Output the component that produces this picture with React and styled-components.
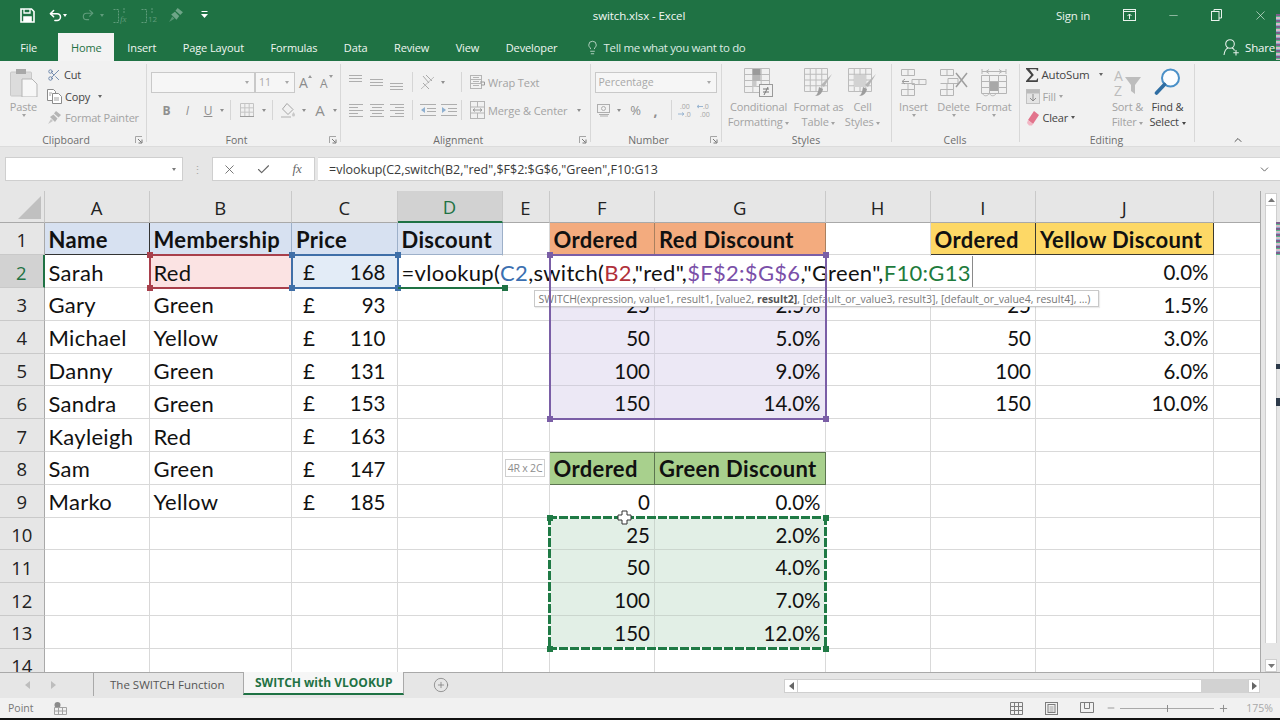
import styled, { createGlobalStyle, css } from "styled-components";
import {
  Undo2,
  Redo2,
  Lightbulb,
  X,
  Check,
  Minus,
  Plus,
  ChevronDown,
  ChevronUp,
  CirclePlus,
  Scissors,
} from "lucide-react";

const GlobalStyle = createGlobalStyle`
  html, body {
    margin: 0;
    padding: 0;
    background: #e6e6e6;
    overflow: hidden;
  }
  * { box-sizing: border-box; }
`;

const Window = styled.div`
  width: 1280px;
  height: 720px;
  display: flex;
  flex-direction: column;
  font-family: "Open Sans", "Liberation Sans", sans-serif;
  overflow: hidden;
  position: relative;
`;

/* stray pixels at the right edge of the recording */
const EdgeSliver = styled.div`
  position: absolute;
  right: 0;
  top: ${({ $top }) => $top}px;
  width: 4px;
  height: ${({ $h }) => $h}px;
  background: ${({ $dark }) =>
    $dark
      ? "#2d3a4a"
      : "repeating-linear-gradient(180deg, #7d5f8c 0 2px, #58b48a 2px 3px, #d9b9c9 3px 5px, #8fa7c9 5px 6px)"};
`;

/* ---------- title bar ---------- */

const TitleBar = styled.div`
  height: 30px;
  flex: none;
  background: #1f7244;
  color: #fff;
  display: grid;
  grid-template-columns: 1fr auto 1fr;
  align-items: center;
`;

const QuickAccess = styled.div`
  display: flex;
  align-items: center;
  padding-left: 20px;
  color: #fff;
`;

const QatSlot = styled.div`
  width: ${({ $w }) => $w}px;
  display: flex;
  align-items: center;
  justify-content: ${({ $start }) => ($start ? "flex-start" : "center")};
  color: ${({ $dim }) => ($dim ? "#5f9c7b" : "#fff")};
`;

const TinyCaret = styled.span`
  display: inline-block;
  width: 0;
  height: 0;
  vertical-align: middle;
  border-left: 2.5px solid transparent;
  border-right: 2.5px solid transparent;
  border-top: 3px solid ${({ $color }) => $color || "currentColor"};
`;

const WindowTitle = styled.div`
  font-size: 11.5px;
  letter-spacing: -0.1px;
  color: #f2f7f4;
  padding-right: 2px;
`;

const WindowControls = styled.div`
  display: flex;
  align-items: center;
  justify-content: flex-end;
  color: #e9f2ed;
  margin-right: -2px;
`;

const SignIn = styled.div`
  font-size: 11.5px;
  letter-spacing: -0.2px;
  margin-right: 18px;
`;

const WinButton = styled.div`
  width: 43.5px;
  display: flex;
  justify-content: center;
`;

/* ---------- ribbon tabs ---------- */

const TabRow = styled.div`
  height: 31px;
  flex: none;
  background: #1f7244;
  display: flex;
  align-items: flex-end;
  padding-left: 7px;
  color: #f0f6f2;
  font-size: 11px;
`;

const RibbonTab = styled.div`
  height: 28px;
  padding: 0 13.2px;
  display: flex;
  align-items: center;
  white-space: nowrap;
  letter-spacing: -0.1px;
  margin-right: ${({ $gap }) => $gap || 0}px;
  ${({ $active }) =>
    $active &&
    css`
      background: #f3f3f3;
      color: #1f7244;
      padding: 0 12.5px;
    `}
`;

const TellMe = styled.div`
  display: flex;
  align-items: center;
  gap: 4px;
  height: 28px;
  margin-left: 14px;
  font-size: 11.5px;
  letter-spacing: -0.35px;
  color: #dcebe3;
`;

const ShareBox = styled.div`
  margin-left: auto;
  height: 28px;
  display: flex;
  align-items: center;
  gap: 5px;
  padding-right: 5px;
  font-size: 11.5px;
  letter-spacing: -0.2px;
  color: #f4f8f6;
`;

/* ---------- ribbon ---------- */

const Ribbon = styled.div`
  height: 86px;
  flex: none;
  background: #f1f1f1;
  border-bottom: 1px solid #dcdcdc;
  display: flex;
  padding: 3px 0 4px;
  font-size: 11px;
  color: #a3a3a3;
`;

const Group = styled.div`
  flex: 0 0 ${({ $w }) => $w}px;
  display: flex;
  flex-direction: column;
  border-right: ${({ $last }) => ($last ? "none" : "1px solid #d8d8d8")};
`;

const GroupBody = styled.div`
  flex: 1;
  min-height: 0;
  display: flex;
  padding-left: ${({ $pad }) => $pad || 0}px;
`;

const GroupFooter = styled.div`
  height: 12px;
  margin-bottom: -4px;
  display: flex;
  align-items: center;
  justify-content: center;
  position: relative;
  padding-right: ${({ $launch }) => ($launch ? 14 : 0)}px;
  font-size: 10.5px;
  color: #6d6d6d;
`;

const Launcher = styled.svg`
  position: absolute;
  right: 3px;
  top: 2px;
`;

const BigButton = styled.div`
  width: ${({ $w }) => $w}px;
  flex: none;
  display: flex;
  flex-direction: column;
  align-items: center;
  padding-top: 4px;
  text-align: center;
  color: ${({ $dark }) => ($dark ? "#444" : "#a3a3a3")};
  line-height: 15px;
  white-space: nowrap;
  letter-spacing: -0.15px;
`;

const BigIcon = styled.div`
  height: 31px;
  display: flex;
  align-items: flex-start;
  justify-content: center;
`;

const SmallColumn = styled.div`
  display: flex;
  flex-direction: column;
  width: ${({ $w }) => $w}px;
  flex: none;
`;

const SmallRow = styled.div`
  height: 21.5px;
  display: flex;
  align-items: center;
  gap: 3px;
  white-space: nowrap;
  letter-spacing: -0.2px;
  color: ${({ $dark }) => ($dark ? "#444" : "#a3a3a3")};
  ${({ $big }) => $big && "font-size: 11.5px;"}
`;

const ControlStack = styled.div`
  display: flex;
  flex-direction: column;
  gap: 6px;
  padding-top: 7px;
`;

const ControlRow = styled.div`
  height: 22px;
  display: flex;
  align-items: center;
  padding-left: ${({ $pad }) => $pad || 0}px;
`;

const Slot = styled.div`
  width: ${({ $w }) => $w}px;
  flex: none;
  display: flex;
  align-items: center;
  justify-content: center;
  color: #8f8f8f;
  font-weight: ${({ $bold }) => ($bold ? 700 : 400)};
  font-style: ${({ $italic }) => ($italic ? "italic" : "normal")};
  text-decoration: ${({ $under }) => ($under ? "underline" : "none")};
  font-size: ${({ $size }) => $size || 12}px;
`;

const RowDivider = styled.div`
  width: 1px;
  height: 20px;
  flex: none;
  background: #d6d6d6;
  margin-left: ${({ $l }) => $l ?? 4}px;
  margin-right: ${({ $r }) => $r ?? 4}px;
`;

const FieldBox = styled.div`
  width: ${({ $w }) => $w}px;
  height: 21px;
  flex: none;
  background: #f6f6f6;
  border: 1px solid #c9c9c9;
  margin-left: ${({ $ml }) => $ml || 0}px;
  display: flex;
  align-items: center;
  justify-content: space-between;
  padding: 0 5px 0 3px;
  color: #a8a8a8;
  font-size: 10.5px;
`;

const WideLabel = styled.span`
  letter-spacing: -0.1px;
  white-space: nowrap;
`;

/* ---------- formula bar ---------- */

const FormulaZone = styled.div`
  height: 44px;
  flex: none;
  background: #e6e6e6;
  display: flex;
  align-items: flex-start;
  padding: 10px 0 0 5px;
`;

const NameBox = styled.div`
  width: 178px;
  height: 24px;
  background: #fff;
  border: 1px solid #cfcfcf;
  display: flex;
  align-items: center;
  justify-content: flex-end;
  padding-right: 6px;
  color: #7b7b7b;
`;

const Grip = styled.div`
  width: 29px;
  height: 24px;
  display: flex;
  align-items: center;
  justify-content: center;
  color: #a9a9a9;
  font-size: 11px;
`;

const FxButtons = styled.div`
  width: 103px;
  height: 24px;
  background: #fff;
  border: 1px solid #cfcfcf;
  display: flex;
  align-items: center;
  padding-left: 0;
  color: #7a7a7a;
`;

const FxSlot = styled.div`
  width: 34px;
  display: flex;
  justify-content: center;
  font-family: "Liberation Serif", serif;
  font-style: italic;
  font-size: 13px;
  color: #666;
`;

const FormulaInput = styled.div`
  flex: 1;
  height: 24px;
  margin: 0 0 0 3px;
  background: #fff;
  border-top: 1px solid #d6d6d6;
  border-bottom: 1px solid #cfcfcf;
  display: flex;
  align-items: center;
  justify-content: space-between;
  padding: 0 9px 0 11px;
  font-size: 12.5px;
  color: #3a3a3a;
`;

/* ---------- sheet ---------- */

const COLUMNS = ["A", "B", "C", "D", "E", "F", "G", "H", "I", "J", ""];

const tracks = css`
  display: grid;
  grid-template-columns: 44.5px 105px 142.5px 105.5px 105px 47px 105.5px 170.5px 105px 105.5px 177.5px 47.5px;
  grid-template-rows: 31.5px repeat(14, 32.8px);
`;

const SheetArea = styled.div`
  height: 481px;
  flex: none;
  display: flex;
  background: #e6e6e6;
  overflow: hidden;
`;

const SheetFrame = styled.div`
  width: 1261px;
  flex: none;
  position: relative;
  overflow: hidden;
  background: #fff;
  border-right: 1px solid #a9a9a9;
`;

const SheetGrid = styled.div`
  ${tracks}
  font-family: Lato, "Liberation Sans", sans-serif;
  font-size: 22px;
  color: #111;
`;

const OverlayGrid = styled.div`
  ${tracks}
  position: absolute;
  inset: 0;
  pointer-events: none;
  font-family: Lato, "Liberation Sans", sans-serif;
  font-size: 22px;
`;

const Corner = styled.div`
  background: #e6e6e6;
  border-right: 1px solid #c6c6c6;
  border-bottom: 1px solid #a9a9a9;
  position: relative;
  &::after {
    content: "";
    position: absolute;
    right: 3px;
    bottom: 3px;
    width: 0;
    height: 0;
    border-left: 23px solid transparent;
    border-bottom: 23px solid #c0c0c0;
  }
`;

const ColHead = styled.div`
  background: ${({ $on }) => ($on ? "#d2d2d2" : "#e6e6e6")};
  color: ${({ $on }) => ($on ? "#1f7244" : "#222")};
  border-right: 1px solid #c9c9c9;
  border-bottom: ${({ $on }) => ($on ? "2px solid #1f7244" : "1px solid #a9a9a9")};
  display: flex;
  align-items: center;
  justify-content: center;
  padding-top: 2px;
  font-family: "Open Sans", sans-serif;
  font-size: 18.5px;
`;

const RowHead = styled.div`
  background: ${({ $on }) => ($on ? "#d2d2d2" : "#e6e6e6")};
  color: ${({ $on }) => ($on ? "#1f7244" : "#222")};
  border-right: ${({ $on }) => ($on ? "2px solid #1f7244" : "1px solid #a9a9a9")};
  border-bottom: 1px solid #c9c9c9;
  display: flex;
  align-items: center;
  justify-content: center;
  padding-top: 2px;
  font-family: "Open Sans", sans-serif;
  font-size: 18.5px;
`;

const Cell = styled.div`
  background: ${({ $fill }) => $fill || "#fff"};
  border-right: 1px solid ${({ $edge, $line }) => $edge || $line || "#d9d9d9"};
  border-bottom: 1px solid ${({ $edge, $line }) => $edge || $line || "#d9d9d9"};
  ${({ $topEdge }) => $topEdge && `box-shadow: inset 0 1px 0 ${$topEdge};`}
  display: flex;
  align-items: center;
  justify-content: ${({ $justify }) => $justify || "flex-start"};
  padding: 2px ${({ $justify }) => ($justify === "space-between" ? "11px" : "4px")} 0;
  font-weight: ${({ $bold }) => ($bold ? 700 : 400)};
  font-size: ${({ $num }) => ($num ? 20.5 : 22)}px;
  letter-spacing: ${({ $num, $bold }) => ($num ? 0 : $bold ? 0.35 : 0.3)}px;
  white-space: nowrap;
  overflow: hidden;
`;

const Range = styled.div`
  grid-column: ${({ $col }) => $col} / span ${({ $cols }) => $cols || 1};
  grid-row: ${({ $row }) => $row} / span ${({ $rows }) => $rows || 1};
  border: 2px solid ${({ $color }) => $color};
  margin: -1px;
  position: relative;
`;

/* the marching ants of the copied range */
const CopyRange = styled.div`
  grid-column: ${({ $col }) => $col} / span ${({ $cols }) => $cols || 1};
  grid-row: ${({ $row }) => $row} / span ${({ $rows }) => $rows || 1};
  margin: -1.5px;
  position: relative;
  --ant: #1f7a45;
  background:
    repeating-linear-gradient(90deg, var(--ant) 0 9px, #f4fbf6 9px 11px) top / 100% 3px no-repeat,
    repeating-linear-gradient(90deg, var(--ant) 0 9px, #f4fbf6 9px 11px) bottom / 100% 3px no-repeat,
    repeating-linear-gradient(180deg, var(--ant) 0 9px, #f4fbf6 9px 11px) left / 3px 100% no-repeat,
    repeating-linear-gradient(180deg, var(--ant) 0 9px, #f4fbf6 9px 11px) right / 3px 100% no-repeat;
`;

const ActiveMark = styled.div`
  grid-column: 5;
  grid-row: 3;
  margin: 0 -1px -1px 0;
  border-bottom: 2px solid #1f7244;
  position: relative;
`;

const Handle = styled.span`
  position: absolute;
  width: 6px;
  height: 6px;
  background: ${({ $color }) => $color};
  ${({ $x, $off = 4 }) => ($x === "l" ? `left: -${$off}px;` : `right: -${$off}px;`)}
  ${({ $y, $off = 4 }) => ($y === "t" ? `top: -${$off}px;` : `bottom: -${$off}px;`)}
`;

const CellEditor = styled.div`
  grid-column: 5 / span 6;
  grid-row: 3;
  width: 573px;
  margin: 1px 0 1px 2px;
  background: #fff;
  border-right: 1px solid #8a8a8a;
  display: flex;
  align-items: center;
  padding: 2px 0 0 2px;
  color: #111;
  letter-spacing: 0.3px;
  white-space: nowrap;
`;

const Ref = styled.span`
  color: ${({ $color }) => $color};
`;

const ArgTip = styled.div`
  grid-column: 6;
  grid-row: 4;
  justify-self: start;
  width: 565px;
  height: 17px;
  margin: 2px 0 0 31px;
  background: #fff;
  border: 1px solid #c9c9c9;
  box-shadow: 1px 1px 1px rgba(0, 0, 0, 0.08);
  display: flex;
  align-items: center;
  padding-left: 4px;
  font-family: "Open Sans", sans-serif;
  font-size: 10.5px;
  color: #777;
  white-space: nowrap;
  b {
    color: #555;
    font-weight: 700;
  }
`;

const SizeHint = styled.div`
  grid-column: 6;
  grid-row: 9;
  justify-self: center;
  align-self: center;
  width: 40px;
  height: 18px;
  margin-left: -2px;
  background: #fff;
  border: 1px solid #cfcfcf;
  display: flex;
  align-items: center;
  justify-content: center;
  font-family: "Open Sans", sans-serif;
  font-size: 10.5px;
  letter-spacing: -0.2px;
  color: #8d8d8d;
`;

const CursorMark = styled.svg`
  position: absolute;
  left: 617px;
  top: 319px;
`;

const VScroll = styled.div`
  flex: 1;
  display: flex;
  flex-direction: column;
  padding: 2px 3px 0 4px;
  background: #e6e6e6;
`;

const ScrollArrow = styled.div`
  height: 13px;
  flex: none;
  background: #fff;
  border: 1px solid #cfcfcf;
  display: flex;
  align-items: center;
  justify-content: center;
  color: #777;
`;

const ScrollThumb = styled.div`
  flex: 1;
  background: #fff;
  border-left: 1px solid #cfcfcf;
  border-right: 1px solid #cfcfcf;
  margin-bottom: 16px;
`;

/* ---------- sheet tabs + status ---------- */

const TabBar = styled.div`
  height: 26px;
  flex: none;
  background: #e6e6e6;
  border-top: 1px solid #a9a9a9;
  display: flex;
  align-items: flex-start;
  font-size: 11.5px;
  color: #555;
`;

const NavArrows = styled.div`
  width: 94px;
  height: 23px;
  flex: none;
  display: flex;
  align-items: center;
  gap: 21px;
  padding-left: 25px;
  border-right: 1px solid #a9a9a9;
  color: #bdbdbd;
`;

const SheetTab = styled.div`
  height: 22px;
  display: flex;
  align-items: center;
  padding: 0 ${({ $active }) => ($active ? 11 : 16)}px;
  white-space: nowrap;
  ${({ $active }) =>
    $active
      ? css`
          background: #f6f6f6;
          color: #1f7244;
          font-size: 12px;
          font-weight: 700;
          border-bottom: 2px solid #1f7244;
          border-left: 1px solid #a9a9a9;
          border-right: 1px solid #a9a9a9;
          margin-top: -1px;
          height: 23px;
        `
      : css`
          width: 149px;
        `}
`;

const AddSheet = styled.div`
  margin-left: 29px;
  height: 24px;
  display: flex;
  align-items: center;
  color: #777;
`;

const HScroll = styled.div`
  margin: 6px 20px 0 auto;
  width: 476px;
  height: 14px;
  display: flex;
  align-items: stretch;
  background: #d2d2d2;
`;

const HArrow = styled.div`
  width: ${({ $w }) => $w}px;
  background: #fff;
  border: 1px solid #cfcfcf;
  display: flex;
  align-items: center;
  justify-content: center;
  color: #666;
`;

const HThumb = styled.div`
  width: 403px;
  background: #fff;
  border-top: 1px solid #cfcfcf;
  border-bottom: 1px solid #cfcfcf;
`;

const HTrack = styled.div`
  flex: 1;
`;

const StatusBar = styled.div`
  height: 20px;
  flex: none;
  background: #f1f1f1;
  display: flex;
  align-items: center;
  padding: 0 7px 0 8px;
  font-size: 10.5px;
  color: #777;
`;

const MacroIcon = styled.div`
  margin-left: 21px;
  display: flex;
  align-items: center;
`;

const ViewButtons = styled.div`
  margin-left: auto;
  display: flex;
  align-items: center;
  gap: 22px;
  margin-right: 12px;
`;

const ZoomControl = styled.div`
  display: flex;
  align-items: center;
  gap: 4px;
  color: #8a8a8a;
`;

const ZoomTrack = styled.div`
  width: 94px;
  height: 1px;
  background: #a9a9a9;
  position: relative;
  &::after {
    content: "";
    position: absolute;
    left: 47px;
    top: -3px;
    width: 1px;
    height: 7px;
    background: #8a8a8a;
  }
`;

const ZoomLabel = styled.div`
  width: 40px;
  text-align: right;
  color: #a8a8a8;
  font-size: 10.5px;
  margin-left: 4px;
`;

const BottomEdge = styled.div`
  height: 2px;
  flex: none;
  background: #111;
`;

const OpenSvg = styled.svg`
  overflow: visible;
`;

/* ---------- drawn icons ---------- */

const SaveIcon = () => (
  <svg width="15" height="15" viewBox="0 0 15 15" fill="none" stroke="#fff" strokeWidth="1.6">
    <path d="M1 1h10.5L14 3.5V14H1z" />
    <path d="M4 1v4h6V1" strokeWidth="1.3" />
    <path d="M4 14V9h7v5" fill="#fff" />
  </svg>
);

const CellsGlyph = ({ w = 27, h = 27, cols = 4, rows = 4, color = "#bcbcbc" }) => {
  const lines = [];
  for (let i = 0; i <= cols; i++) {
    const x = 0.5 + (i * (w - 1)) / cols;
    lines.push(<line key={`c${i}`} x1={x} y1="0.5" x2={x} y2={h - 0.5} />);
  }
  for (let j = 0; j <= rows; j++) {
    const y = 0.5 + (j * (h - 1)) / rows;
    lines.push(<line key={`r${j}`} x1="0.5" y1={y} x2={w - 0.5} y2={y} />);
  }
  return (
    <g stroke={color} strokeWidth="1" fill="none">
      {lines}
    </g>
  );
};

const LauncherMark = () => (
  <Launcher width="8" height="8" viewBox="0 0 8 8" fill="none" stroke="#a5a5a5">
    <path d="M0.500 7V0.500H7" />
    <path d="M3 3l3.500 3.500M7 3.500V7H3.500" stroke="#777" />
  </Launcher>
);

const PasteIcon = () => (
  <svg width="28" height="29" viewBox="0 0 28 29">
    <rect x="0.5" y="4" width="21" height="24" rx="1" fill="#dcdcdc" stroke="#c8c8c8" />
    <rect x="6" y="1" width="10" height="5" fill="#a8a8a8" />
    <path d="M12 11h10l5 5v13H12z" fill="#f7f7f7" stroke="#b5b5b5" />
  </svg>
);

const CopyIcon = () => (
  <svg width="15" height="15" viewBox="0 0 15 15" fill="#fff" stroke="#8b8b8b">
    <path d="M0.5 0.5h6l2 2v9h-8z" />
    <path d="M5.5 4.5h6l3 3v7h-9z" />
    <path d="M7 9h5M7 11h5M2 4h3M2 6h2" strokeWidth="0.8" />
  </svg>
);

const PainterIcon = ({ size = 15, color = "#b5b5b5" }) => (
  <svg width={size} height={size} viewBox="0 0 15 15" fill={color}>
    <path d="M9 1l5 4-2.5 2.5L7 3.5z" />
    <path d="M6.5 4.5l4 4L8 12 3 7z" />
    <path d="M1 14l3-5 2 2z" opacity="0.7" />
  </svg>
);

const GrowA = ({ up }) => (
  <OpenSvg width="14" height="16" viewBox="0 0 14 16">
    <text x="0" y="14" fontFamily="Open Sans, sans-serif" fontSize={up ? 14 : 12} fill="#8c8c8c">
      A
    </text>
    <path d={up ? "M9 4l2-3 2 3z" : "M9 1l2 3 2-3z"} fill="#9a9a9a" />
  </OpenSvg>
);

const BordersIcon = () => (
  <svg width="14" height="14" viewBox="0 0 14 14">
    <CellsGlyph w={14} h={14} cols={3} rows={3} color="#c4c4c4" />
    <path d="M0 13.5h14" stroke="#9c9c9c" />
  </svg>
);

const FillIcon = () => (
  <svg width="16" height="16" viewBox="0 0 16 16" fill="none" stroke="#a5a5a5">
    <path d="M7 1.5l6 6-5 5-5.5-5.5z" />
    <path d="M13.5 10c1 1.500 1.500 2.300 1.500 3a1.500 1.500 0 0 1-3 0c0-.7.500-1.500 1.500-3z" fill="#c9c9c9" stroke="none" />
    <path d="M1 15h10" stroke="#d0d0d0" strokeWidth="2" />
  </svg>
);

const AlignLines = ({ mode }) => {
  const widths = {
    top: [[1, 14, 1], [1, 14, 4], [1, 14, 7]],
    middle: [[1, 14, 5], [1, 14, 8], [1, 14, 11]],
    bottom: [[1, 14, 9], [1, 14, 12], [1, 14, 15]],
    left: [[1, 15, 2], [1, 10, 5], [1, 15, 8], [1, 10, 11], [1, 15, 14]],
    center: [[1, 15, 2], [3, 13, 5], [1, 15, 8], [3, 13, 11], [1, 15, 14]],
    right: [[1, 15, 2], [6, 15, 5], [1, 15, 8], [6, 15, 11], [1, 15, 14]],
  }[mode];
  return (
    <svg width="16" height="16" viewBox="0 0 16 16" stroke="#aeaeae">
      {widths.map(([a, b, y]) => (
        <line key={y} x1={a} x2={b} y1={y + 0.5} y2={y + 0.5} />
      ))}
    </svg>
  );
};

const OrientIcon = () => (
  <svg width="16" height="16" viewBox="0 0 16 16" fill="none" stroke="#a9a9a9">
    <path d="M1 15L14 3" stroke="#bdbdbd" />
    <path d="M3 2l6 7M6 1l6 6" />
    <path d="M3 9l6 6" />
  </svg>
);

const IndentIcon = ({ out }) => (
  <svg width="16" height="14" viewBox="0 0 16 14" stroke="#aeaeae" fill="none">
    <path d="M0 1.500h16M7 5.500h9M7 8.500h9M0 12.500h16" />
    <path d={out ? "M5 4L1 7l4 3z" : "M1 4l4 3-4 3z"} fill="#8fb0d0" stroke="none" />
  </svg>
);

const WrapIcon = () => (
  <svg width="16" height="16" viewBox="0 0 16 16" fill="none" stroke="#b5b5b5">
    <rect x="0.5" y="1.500" width="11" height="13" />
    <path d="M0.5 5.500h11M0.5 9.500h11M3 3.500h6M3 7.500h6M3 11.500h6" />
    <path d="M10 8h4.500v3H11" stroke="#9a9a9a" />
  </svg>
);

const MergeIcon = () => (
  <svg width="15" height="18" viewBox="0 0 15 18" fill="none" stroke="#b5b5b5">
    <rect x="0.5" y="0.5" width="14" height="17" />
    <path d="M0.5 6h14M0.5 12h14M7.500 0.500V6M7.500 12v5.500" />
    <path d="M3 9h9M3 9l2-1.500M3 9l2 1.500M12 9l-2-1.500M12 9l-2 1.500" stroke="#9a9a9a" />
  </svg>
);

const AccountIcon = () => (
  <svg width="14" height="14" viewBox="0 0 14 14" fill="none" stroke="#aeaeae">
    <rect x="0.5" y="1.500" width="12" height="8" />
    <circle cx="6.500" cy="5.500" r="2" />
    <path d="M2 11.500h10M3 13h8" />
  </svg>
);

const DecimalIcon = ({ more }) => (
  <OpenSvg width="16" height="15" viewBox="0 0 16 15">
    <text x={more ? 3 : 6} y="6" fontFamily="Open Sans, sans-serif" fontSize="7" fill="#a5a5a5">
      {more ? ".00" : ".0"}
    </text>
    <text x={more ? 8 : 3} y="14" fontFamily="Open Sans, sans-serif" fontSize="7" fill="#a5a5a5">
      {more ? ".0" : ".00"}
    </text>
    <path
      d={more ? "M1 11h6M7 11l-2-1.500M7 11l-2 1.500" : "M0 3.500h6M0 3.500l2-1.500M0 3.500l2 1.500"}
      stroke="#9ab6d2"
      fill="none"
    />
  </OpenSvg>
);

const CondFormatIcon = () => (
  <svg width="29" height="29" viewBox="0 0 29 29">
    <CellsGlyph w={26} h={25} cols={3} rows={4} />
    <rect x="8.500" y="1" width="8" height="6" fill="#9a9a9a" />
    <rect x="8.500" y="7" width="8" height="6" fill="#b5b5b5" />
    <rect x="8.500" y="13" width="4" height="6" fill="#c8c8c8" />
    <rect x="15.500" y="16.500" width="13" height="12" fill="#f1f1f1" stroke="#9a9a9a" />
    <path d="M19 21h6M19 24h6M24 19l-4 8" stroke="#777" fill="none" />
  </svg>
);

const TableBrushIcon = ({ shaded }) => (
  <svg width="29" height="29" viewBox="0 0 29 29">
    <CellsGlyph w={24} h={24} cols={4} rows={4} />
    {shaded && <rect x="6" y="7" width="12" height="12" fill="#d2d2d2" />}
    <path d="M28 6l-8 13 -3-2z" fill="#b5b5b5" />
    <path d="M11 28c2-1 3-3 4-9l4 2c-1 4-3 7-8 7z" fill="#9d9d9d" />
  </svg>
);

const InsertCellsIcon = () => (
  <svg width="27" height="28" viewBox="0 0 27 28" fill="none" stroke="#b5b5b5">
    <path d="M1.500 1.500h13v6h-13zM8 1.500v6M1.500 21.500h13v6h-13zM1.500 15.500h13v6M8 15.500v12" />
    <path d="M12 11.500h14v5H12zM19 11.500v5" />
    <path d="M2 12h7M2 12l3-2.500M2 12l3 2.500" stroke="#9a9a9a" transform="translate(0 1.500)" />
  </svg>
);

const DeleteCellsIcon = () => (
  <svg width="29" height="28" viewBox="0 0 29 28" fill="none" stroke="#b5b5b5">
    <path d="M1.500 1.500h13v6h-13zM8 1.500v6M1.500 21.500h13v6h-13zM1.500 15.500h13v6M8 15.500v12" />
    <path d="M9 10.500h10v5H9z" />
    <path d="M17 5l11 14M28 5L17 19" stroke="#9e9e9e" strokeWidth="1.500" />
  </svg>
);

const FormatCellsIcon = () => (
  <svg width="26" height="30" viewBox="0 0 26 30" fill="none" stroke="#b5b5b5">
    <path d="M1 3.500h24M1 1v5M25 1v5M5 3.500l3-2M5 3.500l3 2M21 3.500l-3-2M21 3.500l-3 2" />
    <path d="M0.500 7.500h25v18h-25zM8.500 7.500v18M17.500 7.500v18M0.500 13.500h25M0.500 19.500h25" />
    <rect x="9" y="14" width="8" height="9" fill="#a8a8a8" stroke="none" />
    <path d="M2 25.500c0 3 5 3 6 0M9 25.500c0 3 5 3 6 0" />
  </svg>
);

const FillDownIcon = () => (
  <svg width="14" height="15" viewBox="0 0 14 15">
    <rect x="0.500" y="0.500" width="13" height="14" fill="#e4e4e4" stroke="#c2c2c2" />
    <rect x="0.500" y="0.500" width="13" height="4" fill="#bbb" />
    <path d="M7 5v7M4 9l3 3 3-3" stroke="#8c8c8c" fill="none" />
  </svg>
);

const EraserIcon = () => (
  <svg width="14" height="16" viewBox="0 0 14 16">
    <path d="M8 1l5 4-6 9-5-4z" fill="#e2748c" />
    <path d="M2 10l5 4-1 1.500H3L1 13z" fill="#f2b6c4" />
  </svg>
);

const SortFilterIcon = () => (
  <OpenSvg width="29" height="32" viewBox="0 0 29 32">
    <text x="1" y="13" fontFamily="Open Sans, sans-serif" fontSize="14" fill="#bdbdbd">
      A
    </text>
    <text x="1" y="28" fontFamily="Open Sans, sans-serif" fontSize="14" fill="#bdbdbd">
      Z
    </text>
    <path d="M12 9h16l-6 8v9l-4-3v-6z" fill="#bdbdbd" />
  </OpenSvg>
);

const FindIcon = () => (
  <svg width="27" height="27" viewBox="0 0 27 27" fill="none">
    <circle cx="16.500" cy="10" r="8.500" fill="#fbfdff" stroke="#4a90c8" strokeWidth="2" />
    <path d="M10.500 16.500L2.500 25" stroke="#2f6ea3" strokeWidth="3.600" strokeLinecap="round" />
  </svg>
);

const AutoSumIcon = () => (
  <svg width="15" height="16" viewBox="0 0 15 16" fill="#444">
    <path d="M0 0h14v3h-1.500l-.5-1.500H4L9 8l-5.500 6H12l.8-2H14l-.5 4H0v-1l6-7L0 1z" />
  </svg>
);

const ShareIcon = () => (
  <svg width="17" height="17" viewBox="0 0 17 17" fill="none" stroke="#e4efe9" strokeWidth="1.100">
    <circle cx="7" cy="5" r="4.300" />
    <path d="M1 16c.5-3.500 2.500-6.500 4-7M9 9c1 .4 2 1.200 2.500 2.500" />
    <path d="M13 11v5.500M10.300 13.700h5.500" />
  </svg>
);

const GridViewIcon = () => (
  <svg width="13" height="13" viewBox="0 0 13 13">
    <CellsGlyph w={13} h={13} cols={3} rows={3} color="#7c7c7c" />
  </svg>
);

const PageViewIcon = () => (
  <svg width="13" height="13" viewBox="0 0 13 13" fill="none" stroke="#7c7c7c">
    <rect x="0.500" y="0.500" width="12" height="12" />
    <rect x="3" y="2.500" width="7" height="8" />
    <path d="M4.500 5h4M4.500 7h4M4.500 9h4" strokeWidth="0.7" />
  </svg>
);

const BreakViewIcon = () => (
  <svg width="14" height="13" viewBox="0 0 14 13" fill="none" stroke="#7c7c7c">
    <path d="M0.500 10.500V0.500h13v10M0.500 10.500h13" />
    <path d="M4.500 0.500v6h5v-6" />
  </svg>
);

const MacroGlyph = () => (
  <svg width="13" height="13" viewBox="0 0 13 13">
    <circle cx="3.500" cy="3" r="3" fill="#8a8a8a" />
    <path d="M0.500 5.500h12v7h-12zM0.500 9h12M4.500 5.500v7M8.500 5.500v7" stroke="#a2a2a2" fill="none" />
  </svg>
);

const TriangleLeft = () => (
  <svg width="5" height="8" viewBox="0 0 5 8" fill="currentColor">
    <path d="M5 0v8L0 4z" />
  </svg>
);

const TriangleRight = () => (
  <svg width="5" height="8" viewBox="0 0 5 8" fill="currentColor">
    <path d="M0 0v8l5-4z" />
  </svg>
);

const TriangleUp = () => (
  <svg width="7" height="4" viewBox="0 0 7 4" fill="currentColor">
    <path d="M0 4h7L3.500 0z" />
  </svg>
);

const TriangleDown = () => (
  <svg width="7" height="4" viewBox="0 0 7 4" fill="currentColor">
    <path d="M0 0h7L3.500 4z" />
  </svg>
);

/* ---------- data ---------- */

// F2 and G2 stay empty here, the cell editor lies over them in the picture
const ROWS = [
  ["Name", "Membership", "Price", "Discount", "", "Ordered", "Red Discount", "", "Ordered", "Yellow Discount", ""],
  ["Sarah", "Red", 168, "", "", "", "", "", "", "0.0%", ""],
  ["Gary", "Green", 93, "", "", 25, "2.5%", "", 25, "1.5%", ""],
  ["Michael", "Yellow", 110, "", "", 50, "5.0%", "", 50, "3.0%", ""],
  ["Danny", "Green", 131, "", "", 100, "9.0%", "", 100, "6.0%", ""],
  ["Sandra", "Green", 153, "", "", 150, "14.0%", "", 150, "10.0%", ""],
  ["Kayleigh", "Red", 163, "", "", "", "", "", "", "", ""],
  ["Sam", "Green", 147, "", "", "Ordered", "Green Discount", "", "", "", ""],
  ["Marko", "Yellow", 185, "", "", 0, "0.0%", "", "", "", ""],
  ["", "", "", "", "", 25, "2.0%", "", "", "", ""],
  ["", "", "", "", "", 50, "4.0%", "", "", "", ""],
  ["", "", "", "", "", 100, "7.0%", "", "", "", ""],
  ["", "", "", "", "", 150, "12.0%", "", "", "", ""],
  ["", "", "", "", "", "", "", "", "", "", ""],
];

// returns the look of a cell, row is 1 based, col is a column letter
const cellLook = (row, col) => {
  if (row === 1 && "ABCD".includes(col)) return { $fill: "#d7e1f1", $bold: true, $edge: col === "A" ? "#333" : "#9db0c9" };
  if (row === 1 && "FG".includes(col)) return { $fill: "#f3ab7e", $bold: true, $edge: "#a9805f" };
  if (row === 1 && "IJ".includes(col)) return { $fill: "#fdd866", $bold: true, $edge: "#3c3a30" };
  if (row === 8 && "FG".includes(col)) return { $fill: "#a8d08d", $bold: true, $edge: "#5c7550", $topEdge: "#5c7550" };
  if (row === 2 && col === "B") return { $fill: "#fbe3e3" };
  if (row === 2 && col === "C") return { $fill: "#e3ecf7" };
  if (row >= 2 && row <= 6 && "FG".includes(col)) return { $fill: "#ece8f5", $line: "#d3d0dc" };
  if (row >= 10 && row <= 13 && "FG".includes(col)) return { $fill: "#e2efe6", $line: "#cbd6ce" };
  return {};
};

const handles = (color, off) =>
  ["lt", "rt", "lb", "rb"].map((k) => <Handle key={k} $x={k[0]} $y={k[1]} $color={color} $off={off} />);

const SheetCell = ({ row, col, value }) => {
  const look = cellLook(row, col);
  if (col === "C" && typeof value === "number") {
    return (
      <Cell {...look} $num $justify="space-between">
        <span>£</span>
        <span>{value}</span>
      </Cell>
    );
  }
  const right = typeof value === "number" || String(value).endsWith("%");
  return (
    <Cell {...look} $num={right} $justify={right ? "flex-end" : "flex-start"}>
      {value}
    </Cell>
  );
};

export default function App() {
  return (
    <Window>
      <GlobalStyle />
      <TitleBar>
        <QuickAccess>
          <QatSlot $w={28} $start>
            <SaveIcon />
          </QatSlot>
          <QatSlot $w={15}>
            <Undo2 size={15} strokeWidth={2.4} />
          </QatSlot>
          <QatSlot $w={17} $start>
            <TinyCaret />
          </QatSlot>
          <QatSlot $w={16} $dim>
            <Redo2 size={14} strokeWidth={2} />
          </QatSlot>
          <QatSlot $w={11} $dim>
            <TinyCaret />
          </QatSlot>
          <QatSlot $w={28} $dim>
            <svg width="16" height="17" viewBox="0 0 16 17" fill="none" stroke="currentColor">
              <path d="M0.500 2.500h5v13h-5M11 1v5" strokeDasharray="2 1" />
              <text x="7" y="15" fontSize="9" fontStyle="italic" fontFamily="Liberation Serif, serif" fill="currentColor" stroke="none">
                fx
              </text>
            </svg>
          </QatSlot>
          <QatSlot $w={28} $dim>
            <svg width="16" height="17" viewBox="0 0 16 17" fill="none" stroke="currentColor">
              <path d="M0.500 2.500h5v13h-5M11 1v5" strokeDasharray="2 1" />
              <text x="7" y="15" fontSize="8" fontFamily="Open Sans, sans-serif" fill="currentColor" stroke="none">
                12
              </text>
            </svg>
          </QatSlot>
          <QatSlot $w={26} $dim>
            <PainterIcon size={16} color="#6ea588" />
          </QatSlot>
          <QatSlot $w={30}>
            <svg width="7" height="8" viewBox="0 0 7 8" fill="#fff">
              <rect x="0.500" y="0" width="6" height="1" />
              <path d="M0 3h7L3.500 7z" />
            </svg>
          </QatSlot>
        </QuickAccess>
        <WindowTitle>switch.xlsx - Excel</WindowTitle>
        <WindowControls>
          <SignIn>Sign in</SignIn>
          <WinButton>
            <svg width="13" height="12" viewBox="0 0 13 12" fill="none" stroke="currentColor">
              <rect x="0.500" y="0.500" width="12" height="11" />
              <path d="M0.500 2.500h12M6.500 10V5M4.500 7l2-2 2 2" />
            </svg>
          </WinButton>
          <WinButton>
            <Minus size={13} strokeWidth={1} />
          </WinButton>
          <WinButton>
            <svg width="11" height="12" viewBox="0 0 11 12" fill="none" stroke="currentColor">
              <rect x="0.500" y="2.500" width="7.500" height="9" />
              <path d="M3 2.500v-2h7.500v8.500H8" />
            </svg>
          </WinButton>
          <WinButton>
            <X size={15} strokeWidth={1} />
          </WinButton>
        </WindowControls>
      </TitleBar>

      <TabRow>
        <RibbonTab $gap={8}>File</RibbonTab>
        <RibbonTab $active>Home</RibbonTab>
        <RibbonTab>Insert</RibbonTab>
        <RibbonTab>Page Layout</RibbonTab>
        <RibbonTab>Formulas</RibbonTab>
        <RibbonTab>Data</RibbonTab>
        <RibbonTab>Review</RibbonTab>
        <RibbonTab>View</RibbonTab>
        <RibbonTab>Developer</RibbonTab>
        <TellMe>
          <Lightbulb size={15} strokeWidth={1.2} />
          Tell me what you want to do
        </TellMe>
        <ShareBox>
          <ShareIcon />
          Share
        </ShareBox>
      </TabRow>

      <Ribbon>
        <Group $w={147}>
          <GroupBody>
            <BigButton $w={47}>
              <BigIcon>
                <PasteIcon />
              </BigIcon>
              <span>Paste</span>
              <TinyCaret />
            </BigButton>
            <SmallColumn $w={95}>
              <SmallRow $dark>
                <Scissors size={14} strokeWidth={1.3} color="#4f6f9c" />
                Cut
              </SmallRow>
              <SmallRow $dark>
                <CopyIcon />
                Copy
                <Slot $w={14}>
                  <TinyCaret $color="#666" />
                </Slot>
              </SmallRow>
              <SmallRow>
                <PainterIcon />
                Format Painter
              </SmallRow>
            </SmallColumn>
          </GroupBody>
          <GroupFooter $launch>
            Clipboard
            <LauncherMark />
          </GroupFooter>
        </Group>

        <Group $w={194}>
          <GroupBody>
            <ControlStack>
              <ControlRow $pad={4}>
                <FieldBox $w={104}>
                  <span />
                  <TinyCaret />
                </FieldBox>
                <FieldBox $w={40}>
                  11
                  <TinyCaret />
                </FieldBox>
                <Slot $w={22}>
                  <GrowA up />
                </Slot>
                <Slot $w={20}>
                  <GrowA />
                </Slot>
              </ControlRow>
              <ControlRow $pad={9}>
                <Slot $w={21} $bold>
                  B
                </Slot>
                <Slot $w={21} $italic>
                  I
                </Slot>
                <Slot $w={20} $under>
                  U
                </Slot>
                <Slot $w={8}>
                  <TinyCaret />
                </Slot>
                <RowDivider />
                <Slot $w={24}>
                  <BordersIcon />
                </Slot>
                <Slot $w={9}>
                  <TinyCaret />
                </Slot>
                <RowDivider />
                <Slot $w={22}>
                  <FillIcon />
                </Slot>
                <Slot $w={10}>
                  <TinyCaret />
                </Slot>
                <Slot $w={22} $size={15}>
                  A
                </Slot>
                <Slot $w={8}>
                  <TinyCaret />
                </Slot>
              </ControlRow>
            </ControlStack>
          </GroupBody>
          <GroupFooter $launch>
            Font
            <LauncherMark />
          </GroupFooter>
        </Group>

        <Group $w={248}>
          <GroupBody>
            <ControlStack>
              <ControlRow $pad={5}>
                <Slot $w={20}>
                  <AlignLines mode="top" />
                </Slot>
                <Slot $w={21}>
                  <AlignLines mode="middle" />
                </Slot>
                <Slot $w={20}>
                  <AlignLines mode="bottom" />
                </Slot>
                <RowDivider $l={5} $r={5} />
                <Slot $w={20}>
                  <OrientIcon />
                </Slot>
                <Slot $w={10}>
                  <TinyCaret />
                </Slot>
                <RowDivider $l={13} $r={5} />
                <Slot $w={21}>
                  <WrapIcon />
                </Slot>
                <WideLabel>Wrap Text</WideLabel>
              </ControlRow>
              <ControlRow $pad={5}>
                <Slot $w={20}>
                  <AlignLines mode="left" />
                </Slot>
                <Slot $w={21}>
                  <AlignLines mode="center" />
                </Slot>
                <Slot $w={20}>
                  <AlignLines mode="right" />
                </Slot>
                <RowDivider $l={5} $r={5} />
                <Slot $w={20}>
                  <IndentIcon out />
                </Slot>
                <Slot $w={21}>
                  <IndentIcon />
                </Slot>
                <RowDivider $l={2} $r={5} />
                <Slot $w={21}>
                  <MergeIcon />
                </Slot>
                <WideLabel>Merge &amp; Center</WideLabel>
                <Slot $w={22}>
                  <TinyCaret />
                </Slot>
              </ControlRow>
            </ControlStack>
          </GroupBody>
          <GroupFooter $launch>
            Alignment
            <LauncherMark />
          </GroupFooter>
        </Group>

        <Group $w={131}>
          <GroupBody>
            <ControlStack>
              <ControlRow $pad={4}>
                <FieldBox $w={122}>
                  Percentage
                  <TinyCaret />
                </FieldBox>
              </ControlRow>
              <ControlRow $pad={5}>
                <Slot $w={16}>
                  <AccountIcon />
                </Slot>
                <Slot $w={14}>
                  <TinyCaret />
                </Slot>
                <Slot $w={20} $size={13}>
                  %
                </Slot>
                <Slot $w={20} $size={14} $bold>
                  ,
                </Slot>
                <RowDivider $l={5} $r={3} />
                <Slot $w={20}>
                  <DecimalIcon more />
                </Slot>
                <Slot $w={20}>
                  <DecimalIcon />
                </Slot>
              </ControlRow>
            </ControlStack>
          </GroupBody>
          <GroupFooter $launch>
            Number
            <LauncherMark />
          </GroupFooter>
        </Group>

        <Group $w={170}>
          <GroupBody $pad={4}>
            <BigButton $w={66}>
              <BigIcon>
                <CondFormatIcon />
              </BigIcon>
              <span>Conditional</span>
              <span>
                Formatting <TinyCaret />
              </span>
            </BigButton>
            <BigButton $w={54}>
              <BigIcon>
                <TableBrushIcon />
              </BigIcon>
              <span>Format as</span>
              <span>
                Table <TinyCaret />
              </span>
            </BigButton>
            <BigButton $w={34}>
              <BigIcon>
                <TableBrushIcon shaded />
              </BigIcon>
              <span>Cell</span>
              <span>
                Styles <TinyCaret />
              </span>
            </BigButton>
          </GroupBody>
          <GroupFooter>Styles</GroupFooter>
        </Group>

        <Group $w={128}>
          <GroupBody>
            <BigButton $w={44}>
              <BigIcon>
                <InsertCellsIcon />
              </BigIcon>
              <span>Insert</span>
              <TinyCaret />
            </BigButton>
            <BigButton $w={36}>
              <BigIcon>
                <DeleteCellsIcon />
              </BigIcon>
              <span>Delete</span>
              <TinyCaret />
            </BigButton>
            <BigButton $w={44}>
              <BigIcon>
                <FormatCellsIcon />
              </BigIcon>
              <span>Format</span>
              <TinyCaret />
            </BigButton>
          </GroupBody>
          <GroupFooter>Cells</GroupFooter>
        </Group>

        <Group $w={175}>
          <GroupBody $pad={6}>
            <SmallColumn $w={83}>
              <SmallRow $dark $big>
                <AutoSumIcon />
                AutoSum
                <Slot $w={16}>
                  <TinyCaret $color="#666" />
                </Slot>
              </SmallRow>
              <SmallRow>
                <FillDownIcon />
                Fill
                <TinyCaret />
              </SmallRow>
              <SmallRow $dark>
                <EraserIcon />
                Clear
                <TinyCaret $color="#555" />
              </SmallRow>
            </SmallColumn>
            <BigButton $w={38}>
              <BigIcon>
                <SortFilterIcon />
              </BigIcon>
              <span>Sort &amp;</span>
              <span>
                Filter <TinyCaret />
              </span>
            </BigButton>
            <BigButton $w={42} $dark>
              <BigIcon>
                <FindIcon />
              </BigIcon>
              <span>Find &amp;</span>
              <span>
                Select <TinyCaret />
              </span>
            </BigButton>
          </GroupBody>
          <GroupFooter>Editing</GroupFooter>
        </Group>

        <Group $w={87} $last>
          <GroupBody />
          <GroupFooter>
            <ChevronUp size={12} strokeWidth={2} color="#555" />
          </GroupFooter>
        </Group>
      </Ribbon>

      <FormulaZone>
        <NameBox>
          <TinyCaret />
        </NameBox>
        <Grip>⋮</Grip>
        <FxButtons>
          <FxSlot>
            <X size={15} strokeWidth={1.4} />
          </FxSlot>
          <FxSlot>
            <Check size={15} strokeWidth={1.8} />
          </FxSlot>
          <FxSlot>fx</FxSlot>
        </FxButtons>
        <FormulaInput>
          =vlookup(C2,switch(B2,"red",$F$2:$G$6,"Green",F10:G13
          <ChevronDown size={13} strokeWidth={1.8} color="#666" />
        </FormulaInput>
      </FormulaZone>

      <SheetArea>
        <SheetFrame>
          <SheetGrid>
            <Corner />
            {COLUMNS.map((c, i) => (
              <ColHead key={i} $on={c === "D"}>
                {c}
              </ColHead>
            ))}
            {ROWS.map((cells, r) => [
              <RowHead key={`h${r}`} $on={r === 1}>
                {r + 1}
              </RowHead>,
              ...cells.map((value, i) => (
                <SheetCell key={`${r}-${i}`} row={r + 1} col={COLUMNS[i] || "K"} value={value} />
              )),
            ])}
          </SheetGrid>
          <OverlayGrid>
            <Range $col={3} $row={3} $color="#a83f4b">
              {handles("#a83f4b")}
            </Range>
            <Range $col={4} $row={3} $color="#3f6fa8">
              {handles("#3f6fa8")}
            </Range>
            <Range $col={7} $cols={2} $row={3} $rows={5} $color="#7a5ea6">
              {handles("#7a5ea6")}
            </Range>
            <CopyRange $col={7} $cols={2} $row={11} $rows={4}>
              {handles("#1f7a45", 1.5)}
            </CopyRange>
            <CellEditor>
              =vlookup(<Ref $color="#3b6fb0">C2</Ref>,switch(<Ref $color="#b0303a">B2</Ref>,"red",
              <Ref $color="#7a4fa8">$F$2:$G$6</Ref>,"Green",<Ref $color="#1e7b3c">F10:G13</Ref>
            </CellEditor>
            <ActiveMark>
              <Handle $x="r" $y="b" $color="#1f7244" />
            </ActiveMark>
            <ArgTip>
              <span>
                SWITCH(expression, value1, result1, [value2, <b>result2]</b>, [default_or_value3, result3],
                [default_or_value4, result4], ...)
              </span>
            </ArgTip>
            <SizeHint>4R x 2C</SizeHint>
          </OverlayGrid>
          <CursorMark width="15" height="15" viewBox="0 0 15 15">
            <path d="M5 1h5v4h4v5h-4v4H5v-4H1V5h4z" fill="#fff" stroke="#333" strokeWidth="1" />
          </CursorMark>
        </SheetFrame>
        <VScroll>
          <ScrollArrow>
            <TriangleUp />
          </ScrollArrow>
          <ScrollThumb />
          <ScrollArrow>
            <TriangleDown />
          </ScrollArrow>
        </VScroll>
      </SheetArea>

      <TabBar>
        <NavArrows>
          <TriangleLeft />
          <TriangleRight />
        </NavArrows>
        <SheetTab>The SWITCH Function</SheetTab>
        <SheetTab $active>SWITCH with VLOOKUP</SheetTab>
        <AddSheet>
          <CirclePlus size={16} strokeWidth={1.1} />
        </AddSheet>
        <HScroll>
          <HArrow $w={14}>
            <TriangleLeft />
          </HArrow>
          <HThumb />
          <HTrack />
          <HArrow $w={12}>
            <TriangleRight />
          </HArrow>
        </HScroll>
      </TabBar>

      <StatusBar>
        Point
        <MacroIcon>
          <MacroGlyph />
        </MacroIcon>
        <ViewButtons>
          <GridViewIcon />
          <PageViewIcon />
          <BreakViewIcon />
        </ViewButtons>
        <ZoomControl>
          <Minus size={10} strokeWidth={2} />
          <ZoomTrack />
          <Plus size={11} strokeWidth={2} />
        </ZoomControl>
        <ZoomLabel>175%</ZoomLabel>
      </StatusBar>
      <BottomEdge />

      <EdgeSliver $top={14} $h={46} />
      <EdgeSliver $top={222} $h={33} />
      <EdgeSliver $top={364} $h={5} $dark />
      <EdgeSliver $top={398} $h={8} $dark />
    </Window>
  );
}
